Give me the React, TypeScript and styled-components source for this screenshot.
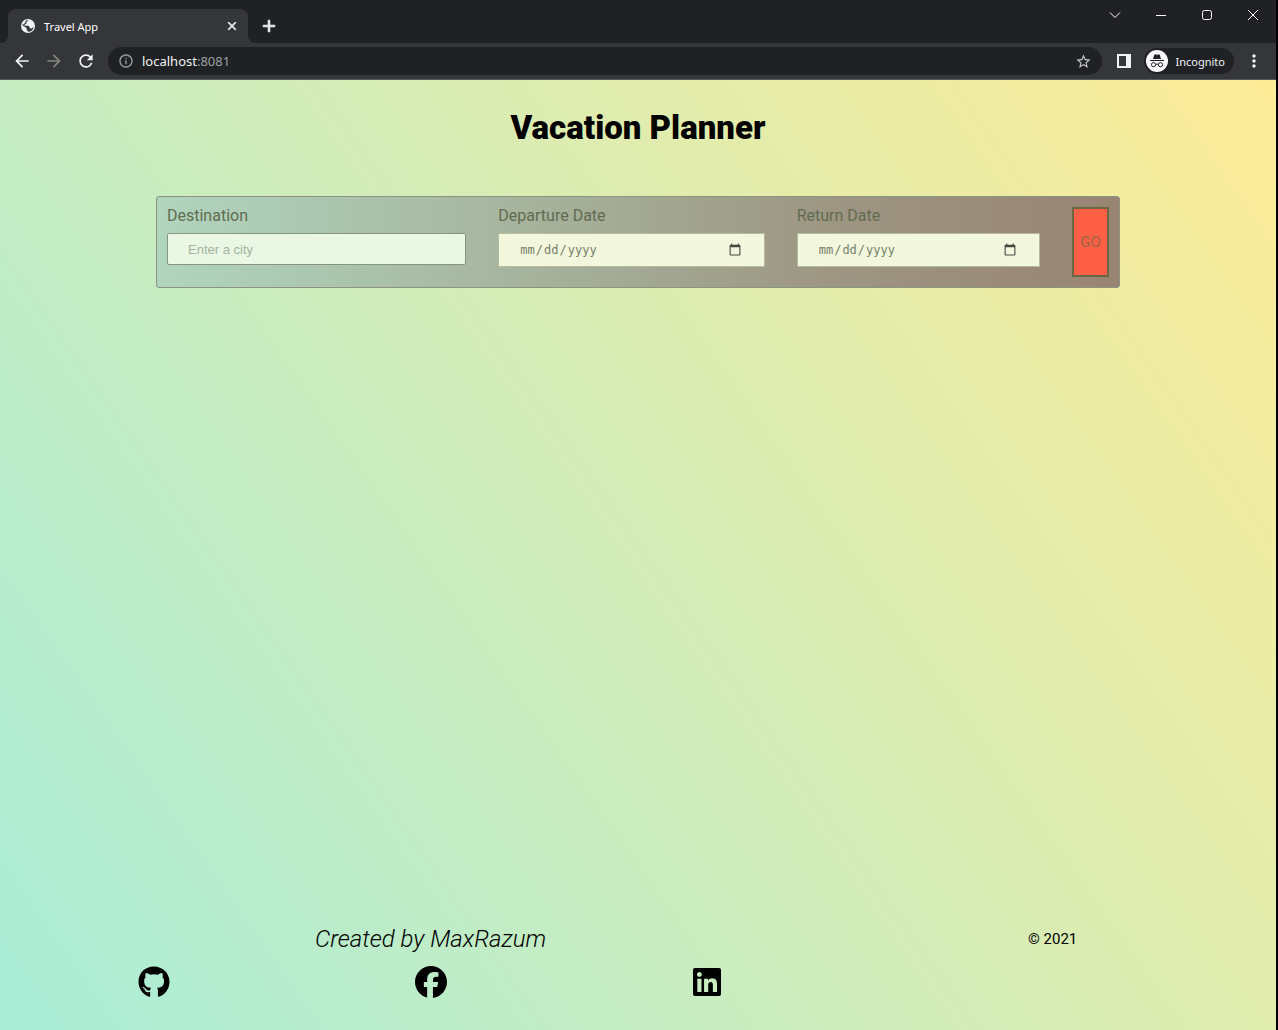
import React from "react";
import styled, { createGlobalStyle } from "styled-components";
import {
  MdAdd,
  MdArrowBack,
  MdArrowForward,
  MdClose,
  MdInfoOutline,
  MdMoreVert,
  MdRefresh,
  MdStarBorder,
} from "react-icons/md";
import { FaFacebook, FaGithub, FaLinkedin } from "react-icons/fa6";

const GlobalStyle = createGlobalStyle`
  *, *::before, *::after { box-sizing: border-box; }
  html, body, #root { height: 100%; }
  body { margin: 0; background: #000; }
`;

const uiFont = `"Noto Sans", "Open Sans", sans-serif`;
const pageFont = `Roboto, "Open Sans", sans-serif`;

const Window = styled.div`
  display: flex;
  flex-direction: column;
  min-height: 100%;
  padding-right: 2px;
  background: #000;
`;

const TabStrip = styled.div`
  display: flex;
  height: 43px;
  background: #202124;
  color: #fff;
  padding-left: 8px;
  font-family: ${uiFont};
`;

const Tab = styled.div`
  position: relative;
  display: flex;
  align-items: center;
  gap: 8px;
  width: 240px;
  height: 34px;
  margin-top: 9px;
  padding: 0 8px 0 12px;
  border-radius: 8px 8px 0 0;
  background: #35363a;
  font-size: 11px;

  &::before,
  &::after {
    content: "";
    position: absolute;
    bottom: 0;
    width: 8px;
    height: 8px;
  }
  &::before {
    right: 100%;
    background: radial-gradient(circle at 0 0, transparent 8px, #35363a 8px);
  }
  &::after {
    left: 100%;
    background: radial-gradient(circle at 100% 0, transparent 8px, #35363a 8px);
  }
`;

const TabTitle = styled.span`
  flex: 1;
`;

const IconButton = styled.button<{ $size?: number; $muted?: boolean; $bold?: boolean }>`
  display: grid;
  place-items: center;
  flex: none;
  width: ${(p) => p.$size ?? 20}px;
  height: ${(p) => p.$size ?? 20}px;
  padding: 0;
  border: 0;
  background: none;
  color: ${(p) => (p.$muted ? "#84877f" : "#f1f3f4")};

  path:not([fill="none"]) {
    stroke: currentColor;
    stroke-width: ${(p) => (p.$bold ? 1 : 0)};
  }
`;

const NewTab = styled(IconButton)`
  margin: 16px 0 0 11px;
`;

const WindowControls = styled.div`
  display: flex;
  margin-left: auto;
`;

const WindowButton = styled.button`
  display: grid;
  place-items: center;
  width: 46px;
  height: 30px;
  padding: 0;
  border: 0;
  background: none;
  color: #fff;
`;

const Toolbar = styled.div`
  display: flex;
  align-items: center;
  height: 37px;
  padding: 0 12px;
  border-bottom: 1px solid #56575a;
  background: #35363a;
  color: #f1f3f4;
  font-family: ${uiFont};
`;

const Navigation = styled.div`
  display: flex;
  gap: 12px;
`;

const AddressBar = styled.div`
  display: flex;
  flex: 1;
  align-items: center;
  height: 28px;
  margin: 0 12px;
  padding: 0 8px 0 10px;
  border-radius: 14px;
  background: #202124;
  color: #9aa0a6;
`;

const Address = styled.div`
  flex: 1;
  margin-left: 8px;
  font-size: 13px;

  b {
    color: #f1f3f4;
    font-weight: 400;
  }
`;

const Incognito = styled.button`
  display: flex;
  align-items: center;
  gap: 8px;
  height: 26px;
  margin: 0 10px;
  padding: 0 9px 0 2px;
  border: 0;
  border-radius: 13px;
  background: #202124;
  color: #f1f3f4;
  font-family: ${uiFont};
  font-size: 11px;
`;

const Page = styled.div`
  display: flex;
  flex: 1;
  flex-direction: column;
  background: linear-gradient(55deg, #a9edd8, #ffec96 102%);
  color: #000;
  font-family: ${pageFont};
`;

const Title = styled.h1`
  margin: 0;
  padding: 28px 0 48px;
  font-size: 33px;
  font-weight: 900;
  line-height: 40px;
  text-align: center;
`;

const Main = styled.main`
  flex: 1;
  padding: 0 156px;
`;

const TripForm = styled.form`
  display: grid;
  grid-template-columns: 299fr 266fr 243fr 37px;
  gap: 32px;
  padding: 10px;
  border: 1px solid #8a947f;
  border-radius: 3px;
  background: linear-gradient(90deg, #b0d5bf, #a5b09a 42%, #9d9683 70%, #998472);
`;

const Field = styled.label`
  display: flex;
  flex-direction: column;
  gap: 8px;
  color: #626b50;
  font-size: 16px;
  line-height: 18px;
`;

const Input = styled.input<{ $date?: boolean }>`
  width: 100%;
  height: ${(p) => (p.$date ? 34 : 32)}px;
  padding: 0 20px;
  border: 1px solid ${(p) => (p.$date ? "#b5bb9d" : "#87957f")};
  border-radius: ${(p) => (p.$date ? 0 : 2)}px;
  background: ${(p) => (p.$date ? "#f2f7de" : "#e9f7e4")};
  color: #75806a;
  font: ${(p) => (p.$date ? `12px "DejaVu Sans Mono", monospace` : `13px "Liberation Sans", sans-serif`)};

  &::placeholder {
    color: #a4b39e;
  }
  &::-webkit-calendar-picker-indicator {
    width: 14px;
    height: 14px;
    opacity: 0.7;
  }
`;

const GoButton = styled.button`
  min-height: 70px;
  padding: 0;
  border: 2px solid #686943;
  background: #fd6044;
  color: #9c6341;
  font-family: ${pageFont};
  font-size: 15px;
`;

const Footer = styled.footer`
  display: grid;
  grid-template-columns: 2fr 1fr;
  padding: 0 16px 32px;
  text-align: center;
`;

const Credit = styled.p`
  margin: 0 0 12px;
  font-size: 24px;
  font-style: italic;
  font-weight: 300;
  line-height: 30px;
`;

const Copyright = styled.p`
  margin: 0;
  font-size: 15px;
  line-height: 30px;
`;

const SocialLinks = styled.nav`
  display: flex;
  justify-content: space-around;
`;

const SocialLink = styled.a`
  display: flex;
  color: #000;
`;

const Globe = () => (
  <svg width="16" height="16" viewBox="0 0 16 16" aria-hidden="true">
    <circle cx="8" cy="8" r="7" fill="#f1f3f4" />
    <path
      d="M8.500 2.300 6.500 4v1.600L4.700 6.500v1.300h3.600l1.500 1.400v1.300h1.800l1.100-.9h.9A5.800 5.800 0 0 1 7.600 13.800v-1.400l-1-.7v-1.600L2.300 7.200A5.700 5.700 0 0 1 8.500 2.300z"
      fill="#35363a"
    />
    <path d="M2.300 6.300Q3 3.300 6 2.300L5.300 4.600 3.600 6.500z" fill="#f1f3f4" />
  </svg>
);

const SidePanel = () => (
  <svg width="14" height="14" viewBox="0 0 14 14" aria-hidden="true">
    <path d="M0 0h14v14H0zM2 2v10h7V2z" fill="#f1f3f4" fillRule="evenodd" />
  </svg>
);

const Spy = () => (
  <svg width="22" height="22" viewBox="0 0 22 22" aria-hidden="true">
    <circle cx="11" cy="11" r="11" fill="#f8f9fa" />
    <path d="M7 9 8.200 5q.3-.9 1.200-.6l1.600.4 1.600-.4q.9-.3 1.200.6L15 9z" fill="#202124" />
    <path d="M4 10.500h14" stroke="#202124" />
    <g fill="none" stroke="#202124">
      <circle cx="7.500" cy="14.700" r="2.100" />
      <circle cx="14.500" cy="14.700" r="2.100" />
      <path d="M9.600 14.400q1.400-.8 2.800 0" />
    </g>
  </svg>
);

const controls = [
  { name: "Search tabs", d: "M1 3.500l5 5 5-5" },
  { name: "Minimize", d: "M1 6.500h10" },
  { name: "Maximize", d: "M3.500 1.500h5q2 0 2 2v5q0 2-2 2h-5q-2 0-2-2v-5q0-2 2-2z" },
  { name: "Close", d: "M1 1l10 10M11 1 1 11" },
];

const socials = [
  { name: "GitHub", Icon: FaGithub },
  { name: "Facebook", Icon: FaFacebook },
  { name: "LinkedIn", Icon: FaLinkedin },
];

export default function App() {
  return (
    <>
      <GlobalStyle />
      <Window>
        <TabStrip>
          <Tab>
            <Globe />
            <TabTitle>Travel App</TabTitle>
            <IconButton $size={16} $bold aria-label="Close tab">
              <MdClose size={14} />
            </IconButton>
          </Tab>
          <NewTab $bold aria-label="New tab">
            <MdAdd size={20} />
          </NewTab>
          <WindowControls>
            {controls.map((c) => (
              <WindowButton key={c.name} aria-label={c.name}>
                <svg width="12" height="12" viewBox="0 0 12 12" fill="none" stroke="currentColor">
                  <path d={c.d} />
                </svg>
              </WindowButton>
            ))}
          </WindowControls>
        </TabStrip>
        <Toolbar>
          <Navigation>
            <IconButton aria-label="Back"><MdArrowBack size={20} /></IconButton>
            <IconButton $muted aria-label="Forward"><MdArrowForward size={20} /></IconButton>
            <IconButton aria-label="Reload"><MdRefresh size={20} /></IconButton>
          </Navigation>
          <AddressBar>
            <MdInfoOutline size={16} />
            <Address><b>localhost</b>:8081</Address>
            <IconButton aria-label="Bookmark"><MdStarBorder size={17} color="#c4c7c5" /></IconButton>
          </AddressBar>
          <IconButton aria-label="Side panel"><SidePanel /></IconButton>
          <Incognito>
            <Spy />
            Incognito
          </Incognito>
          <IconButton aria-label="Menu"><MdMoreVert size={20} /></IconButton>
        </Toolbar>
        <Page>
          <Title>Vacation Planner</Title>
          <Main>
            <TripForm>
              <Field>
                Destination
                <Input type="text" placeholder="Enter a city" />
              </Field>
              <Field>
                Departure Date
                <Input $date type="date" />
              </Field>
              <Field>
                Return Date
                <Input $date type="date" />
              </Field>
              <GoButton type="button">GO</GoButton>
            </TripForm>
          </Main>
          <Footer>
            <div>
              <Credit>Created by MaxRazum</Credit>
              <SocialLinks>
                {socials.map(({ name, Icon }) => (
                  <SocialLink key={name} href="#" aria-label={name}>
                    <Icon size={32} />
                  </SocialLink>
                ))}
              </SocialLinks>
            </div>
            <Copyright>© 2021</Copyright>
          </Footer>
        </Page>
      </Window>
    </>
  );
}
